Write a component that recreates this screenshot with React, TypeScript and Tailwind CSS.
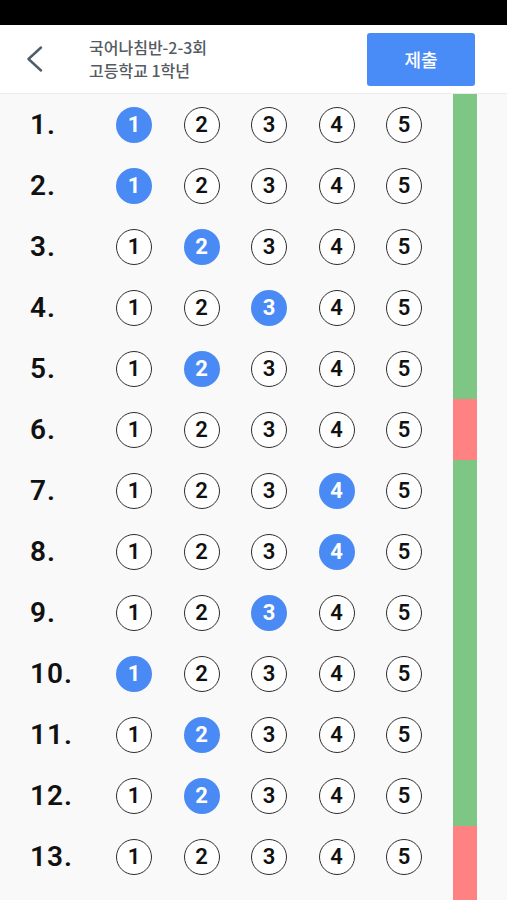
type Row = { no: number; picked: number | null };

const rows: Row[] = [
  { no: 1, picked: 1 },
  { no: 2, picked: 1 },
  { no: 3, picked: 2 },
  { no: 4, picked: 3 },
  { no: 5, picked: 2 },
  { no: 6, picked: null },
  { no: 7, picked: 4 },
  { no: 8, picked: 4 },
  { no: 9, picked: 3 },
  { no: 10, picked: 1 },
  { no: 11, picked: 2 },
  { no: 12, picked: 2 },
  { no: 13, picked: null },
];

function Choice({ value, selected }: { value: number; selected: boolean }) {
  return (
    <span
      className={
        selected
          ? "flex h-9 w-9 items-center justify-center rounded-full bg-[#4a8af4] text-[22px] font-bold text-white"
          : "flex h-9 w-9 items-center justify-center rounded-full border-[1.5px] border-[#2e2e2e] bg-white text-[22px] font-semibold text-[#111]"
      }
    >
      {value}
    </span>
  );
}

export default function App() {
  const lastMissing = rows[rows.length - 1].picked === null;

  return (
    <div className="flex h-[900px] flex-col overflow-hidden bg-[#f9f9f9] font-['Roboto','Noto_Sans_CJK_KR',sans-serif]">
      <div className="h-[25px] shrink-0 bg-black" />

      <header className="flex h-[69px] shrink-0 items-center border-b border-[#ececec] bg-white pr-[32px]">
        <button className="ml-[26px] flex h-8 w-[18px] items-center justify-center text-[#4d5d69]" type="button">
          <svg aria-hidden="true" fill="none" height="26" viewBox="0 0 18 26" width="18">
            <path
              d="M15 1.5 2.5 13 15 24.5"
              stroke="currentColor"
              strokeLinecap="round"
              strokeLinejoin="round"
              strokeWidth="2.4"
            />
          </svg>
        </button>
        <div className="ml-[45px] flex flex-col font-['Noto_Sans_CJK_KR',sans-serif] text-[16px] font-medium leading-[23px] text-[#555b62]">
          <span>국어나침반-2-3회</span>
          <span>고등학교 1학년</span>
        </div>
        <button
          className="ml-auto h-[53px] w-[108px] rounded-[3px] bg-[#4a8cf7] font-['Noto_Sans_CJK_KR',sans-serif] text-[18px] font-medium text-white"
          type="button"
        >
          제출
        </button>
      </header>

      <ul className="flex flex-1 flex-col">
        {rows.map((row) => (
          <li className="flex h-[61px] shrink-0 items-center pl-[30px] pr-[30px]" key={row.no}>
            <span className="w-[86px] text-[28px] font-semibold tracking-[1px] text-[#111]">{row.no}.</span>
            <div className="flex gap-[31.5px]">
              {[1, 2, 3, 4, 5].map((v) => (
                <Choice key={v} selected={row.picked === v} value={v} />
              ))}
            </div>
            <span
              className={
                row.picked === null
                  ? "ml-auto w-6 self-stretch bg-[#ff8282]"
                  : "ml-auto w-6 self-stretch bg-[#7dc684]"
              }
            />
          </li>
        ))}
        <li className="flex flex-1 pr-[30px]">
          <span className={lastMissing ? "ml-auto w-6 bg-[#ff8282]" : "ml-auto w-6 bg-[#7dc684]"} />
        </li>
      </ul>
    </div>
  );
}
